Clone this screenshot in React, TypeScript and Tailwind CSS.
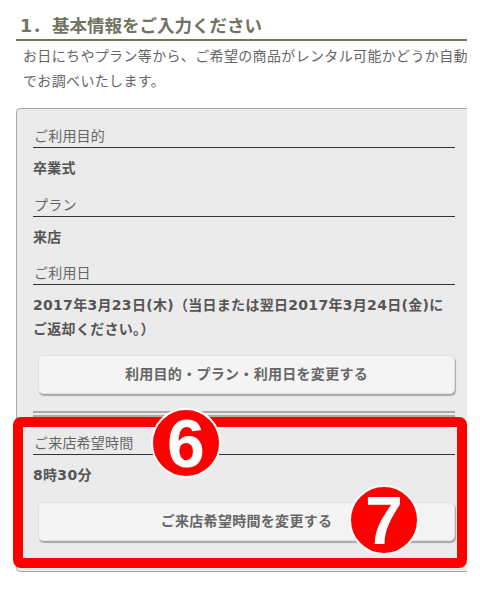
import React from 'react';

const Label: React.FC<{ children: React.ReactNode }> = ({ children }) => (
  <div className="h-[23px] border-b border-[#333] pl-px text-[14px] leading-[22px] tracking-[0.2px] text-[#666]">{children}</div>
);

const Value: React.FC<{ children: React.ReactNode }> = ({ children }) => (
  <div className="mt-[8px] text-[14px] font-bold leading-[24px] tracking-[0.3px] text-[#555]">{children}</div>
);

const ChangeButton: React.FC<{ children: React.ReactNode; className?: string }> = ({ children, className }) => (
  <button className={`ml-[5px] flex h-[39px] w-[417px] items-center justify-center rounded-[5px] border border-[#e0e0e0] bg-[#f4f4f4] text-[14px] font-bold tracking-[0.3px] text-[#666] shadow-[1px_2px_1px_#aaa] ${className ?? ''}`}>
    {children}
  </button>
);

const Badge: React.FC<{ n: string; className: string }> = ({ n, className }) => (
  <div className={`absolute flex h-[70px] w-[70px] items-center justify-center rounded-full border-2 border-white bg-[#f00] font-['Liberation_Sans',sans-serif] text-[68px] font-bold leading-none text-white ${className}`}>
    {n}
  </div>
);

export default function App() {
  return (
    <div className="relative h-[600px] w-[480px] overflow-hidden bg-white font-['DejaVu_Sans','Noto_Sans_CJK_JP',sans-serif]">
      <div className="w-[467px] overflow-hidden pl-4 pt-[15px]">
        <h2 className="flex h-[26px] border-b-[2px] border-[#6f7560] text-[17.5px] font-bold leading-[22px] text-[#6f7560]">
          <span className="w-[36px] pl-[4px]">1．</span>
          <span>基本情報をご入力ください</span>
        </h2>
        <p className="w-[470px] pl-[7px] pt-[3px] text-[14px] leading-[25px] tracking-[0.35px] text-[#666] whitespace-nowrap">
          お日にちやプラン等から、ご希望の商品がレンタル可能かどうか自動
          <br />
          でお調べいたします。
        </p>

        {/* Result panel, runs off the right edge */}
        <div className="mt-[14px] h-[464px] w-[470px] rounded-l-[4px] border border-[#aaa] bg-[#ebebeb] pl-4 pt-4">
          <div className="w-[422px]">
            <Label>ご利用目的</Label>
            <Value>卒業式</Value>
            <div className="mt-[14px]">
              <Label>プラン</Label>
            </div>
            <Value>来店</Value>
            <div className="mt-[13px]">
              <Label>ご利用日</Label>
            </div>
            <Value>
              2017年3月23日(木)（当日または翌日2017年3月24日(金)に
              <br />
              ご返却ください。）
            </Value>
            <ChangeButton className="mt-[14px]">利用目的・プラン・利用日を変更する</ChangeButton>
            <div className="mt-[17px] h-[6px] border-y-2 border-[#aaa]" />
            <div className="mt-[15px]">
              <Label>ご来店希望時間</Label>
            </div>
            <Value>8時30分</Value>
            <ChangeButton className="mt-[15px]">ご来店希望時間を変更する</ChangeButton>
          </div>
        </div>
      </div>

      {/* Annotation overlay */}
      <div className="absolute left-[13px] top-[417px] h-[151px] w-[454px] rounded-[8px] border-[10px] border-[#f00]" />
      <Badge n="6" className="left-[151px] top-[408px]" />
      <Badge n="7" className="left-[349px] top-[485px]" />
    </div>
  );
}
